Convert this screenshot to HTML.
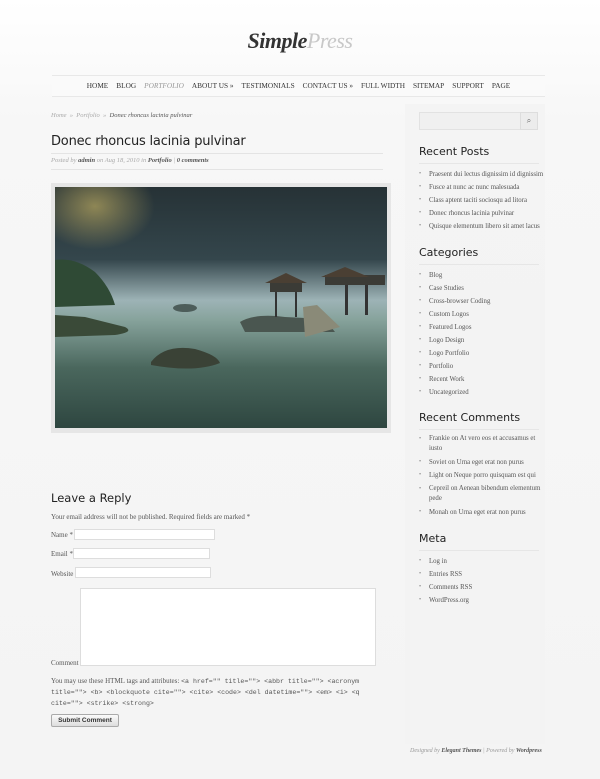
<!DOCTYPE html>
<html><head><meta charset="utf-8"><style>
*{margin:0;padding:0;box-sizing:border-box}
body{width:600px;height:779px;overflow:hidden;background:linear-gradient(#fff 0,#f7f7f7 120px,#f4f4f4 100%);font-family:"Liberation Serif",serif;color:#555;position:relative;font-size:7px}
.a{position:absolute;white-space:nowrap}
.logo{left:0;width:600px;text-align:center;top:28px;font-size:22px;font-style:italic;font-weight:bold;font-family:"Liberation Serif",serif;letter-spacing:-0.5px}
.nav{left:52px;width:493px;top:75px;height:22px;border-top:1px solid #e8e8e8;border-bottom:1px solid #e8e8e8;background:#fafafa;text-align:center;font-size:7.3px;color:#333;line-height:20px}
.nav span{margin:0 4px}
h1,h2{font-family:"DejaVu Sans","Liberation Sans",sans-serif;font-weight:normal;color:#222}
.side{left:405px;top:104px;width:140px;height:640px;background:#f2f2f2;opacity:.6}
ul{list-style:none}
.w li{position:relative;padding-left:10px;font-size:6.8px;color:#555;line-height:13px}
.w li:before{content:"•";position:absolute;left:0;color:#888;font-size:6px}
.w h2{font-size:11px;padding-bottom:5px;border-bottom:1px solid #e6e6e6;margin-bottom:4px;width:120px}
.in{position:absolute;background:#fff;border:1px solid #ddd;height:11px}
</style></head><body>
<div class="a logo"><span style="color:#333">Simple</span><span style="color:#c8c8c8;font-weight:normal">Press</span></div>
<div class="a nav"><span>HOME</span><span>BLOG</span><span style="color:#999;font-style:italic">PORTFOLIO</span><span>ABOUT US »</span><span>TESTIMONIALS</span><span>CONTACT US »</span><span>FULL WIDTH</span><span>SITEMAP</span><span>SUPPORT</span><span>PAGE</span></div>
<div class="a side"></div>
<div class="a" style="left:51px;top:112px;font-style:italic;color:#aaa;font-size:6.5px">Home &nbsp;» &nbsp;Portfolio &nbsp;» &nbsp;<span style="color:#555">Donec rhoncus lacinia pulvinar</span></div>
<h1 class="a" style="left:51px;top:134px;font-size:13px;letter-spacing:-0.2px">Donec rhoncus lacinia pulvinar</h1>
<div class="a" style="left:51px;top:153px;width:332px;border-top:1px solid #e4e4e4"></div>
<div class="a" style="left:51px;top:157px;font-style:italic;color:#aaa;font-size:6.5px">Posted by <b style="color:#555">admin</b> on Aug 18, 2010 in <b style="color:#555">Portfolio</b> | <b style="color:#555">0 comments</b></div>
<div class="a" style="left:51px;top:169px;width:332px;border-top:1px solid #e4e4e4"></div>
<div class="a" style="left:51px;top:183px;width:340px;height:250px;background:#e6e6e6;padding:4px">
<svg width="332" height="241" viewBox="0 0 332 241" style="display:block">
<defs><linearGradient id="s" x1="0" y1="0" x2="0" y2="1"><stop offset="0" stop-color="#263236"/><stop offset="0.3" stop-color="#34464c"/><stop offset="0.47" stop-color="#9db3b6"/><stop offset="0.55" stop-color="#87a39c"/><stop offset="0.75" stop-color="#4a675d"/><stop offset="1" stop-color="#2e4640"/></linearGradient>
<radialGradient id="c" cx="0.12" cy="0.08" r="0.18"><stop offset="0" stop-color="#b9a860" stop-opacity="0.7"/><stop offset="1" stop-color="#b9a860" stop-opacity="0"/></radialGradient></defs>
<rect width="332" height="241" fill="url(#s)"/>
<rect width="332" height="241" fill="url(#c)"/>
<path d="M0 73 Q20 70 40 85 Q55 100 60 118 L0 120Z" fill="#2f4a35"/>
<path d="M0 128 L30 130 L70 140 Q80 145 60 148 L0 150Z" fill="#3a4a38"/>
<ellipse cx="130" cy="121" rx="12" ry="4" fill="#4d5d5a"/>
<path d="M96 175 Q110 157 140 162 Q162 168 165 176 Q140 186 96 178Z" fill="#3a4236"/>
<path d="M185 135 Q200 126 230 130 L270 132 L280 145 L190 145Z" fill="#4a5650"/>
<path d="M248 120 L262 118 L285 140 L250 150Z" fill="#8a8a78"/>
<rect x="215" y="95" width="32" height="10" fill="#3b3b36"/><path d="M210 96 L231 86 L252 96Z" fill="#4a3f33"/>
<rect x="270" y="88" width="60" height="10" fill="#3b3b36"/><path d="M266 90 L290 80 L314 90Z" fill="#4a3f33"/>
<rect x="220" y="105" width="2" height="25" fill="#333"/><rect x="240" y="105" width="2" height="25" fill="#333"/><rect x="290" y="98" width="3" height="30" fill="#333"/><rect x="310" y="98" width="3" height="30" fill="#333"/>
</svg></div>
<h2 class="a" style="left:51px;top:491px;font-size:11.5px">Leave a Reply</h2>
<div class="a" style="left:51px;top:513px">Your email address will not be published. Required fields are marked *</div>
<div class="a" style="left:51px;top:531px">Name *</div><div class="in" style="left:74px;top:529px;width:141px"></div>
<div class="a" style="left:51px;top:550px">Email *</div><div class="in" style="left:73px;top:548px;width:137px"></div>
<div class="a" style="left:51px;top:570px">Website</div><div class="in" style="left:75px;top:567px;width:136px"></div>
<div class="in" style="left:80px;top:588px;width:296px;height:78px"></div>
<div class="a" style="left:51px;top:659px">Comment</div>
<div class="a" style="left:51px;top:676px;line-height:10px;white-space:normal;width:330px">You may use these HTML tags and attributes: <span style="font-family:'Liberation Mono',monospace;font-size:6.6px">&lt;a href="" title=""&gt; &lt;abbr title=""&gt; &lt;acronym title=""&gt; &lt;b&gt; &lt;blockquote cite=""&gt; &lt;cite&gt; &lt;code&gt; &lt;del datetime=""&gt; &lt;em&gt; &lt;i&gt; &lt;q cite=""&gt; &lt;strike&gt; &lt;strong&gt;</span></div>
<div class="a" style="left:51px;top:714px;width:68px;height:13px;border:1px solid #aaa;border-radius:2px;background:linear-gradient(#fafafa,#ddd);font-family:'Liberation Sans',sans-serif;font-weight:bold;font-size:6.5px;color:#333;text-align:center;line-height:11px">Submit Comment</div>
<div class="in" style="left:419px;top:112px;width:119px;height:18px;background:#f0f0f0;border-color:#e2e2e2"></div>
<div class="a" style="left:520px;top:112px;width:18px;height:18px;border:1px solid #ddd;background:#ececec;text-align:center;line-height:16px;font-size:8px;color:#666">⌕</div>
<div class="a w" style="left:419px;top:145px"><h2>Recent Posts</h2><ul><li>Praesent dui lectus dignissim id dignissim</li><li>Fusce at nunc ac nunc malesuada</li><li>Class aptent taciti sociosqu ad litora</li><li>Donec rhoncus lacinia pulvinar</li><li>Quisque elementum libero sit amet lacus</li></ul></div>
<div class="a w" style="left:419px;top:246px"><h2>Categories</h2><ul><li>Blog</li><li>Case Studies</li><li>Cross-browser Coding</li><li>Custom Logos</li><li>Featured Logos</li><li>Logo Design</li><li>Logo Portfolio</li><li>Portfolio</li><li>Recent Work</li><li>Uncategorized</li></ul></div>
<div class="a w" style="left:419px;top:411px"><h2>Recent Comments</h2><ul style="white-space:normal;width:130px"><li style="line-height:10px;margin:2px 0">Frankie on At vero eos et accusamus et iusto</li><li>Soviet on Urna eget erat non purus</li><li>Light on Neque porro quisquam est qui</li><li style="line-height:10px;margin:2px 0">Cepreil on Aenean bibendum elementum pede</li><li>Monah on Urna eget erat non purus</li></ul></div>
<div class="a w" style="left:419px;top:532px"><h2>Meta</h2><ul><li>Log in</li><li>Entries RSS</li><li>Comments RSS</li><li>WordPress.org</li></ul></div>
<div class="a" style="left:410px;top:748px;font-style:italic;color:#999;font-size:6px">Designed by <b style="color:#555">Elegant Themes</b> | Powered by <b style="color:#555">Wordpress</b></div>
</body></html>
